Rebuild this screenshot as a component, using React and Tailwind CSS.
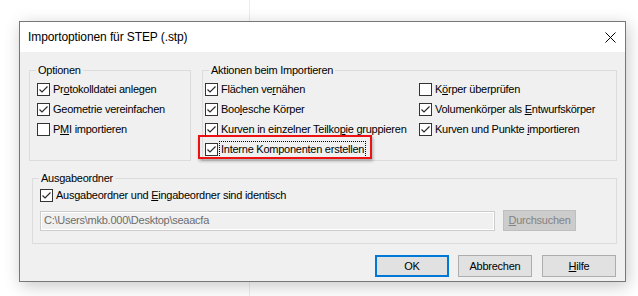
import React from 'react';

// Small Win10 style checkbox
function Box({ checked }) {
  return (
    <span className="w-[13px] h-[13px] border border-[#333333] bg-white flex items-center justify-center shrink-0">
      {checked && (
        <svg width="11" height="11" viewBox="0 0 11 11">
          <path d="M1.5 5.5 L4 8 L9.5 2.5" stroke="#2b2b2b" strokeWidth="1.2" fill="none" />
        </svg>
      )}
    </span>
  );
}

function Check({ checked, children }) {
  return (
    <div className="h-[20px] flex items-center">
      <Box checked={checked} />
      <span className="ml-[3px] leading-[15px]">{children}</span>
    </div>
  );
}

const u = (c) => <span className="underline underline-offset-[1px]">{c}</span>;

export default function App() {
  return (
    <div className="relative w-[638px] h-[296px] bg-white overflow-hidden pt-[21px] pl-[19px] font-['Liberation_Sans',Arial,sans-serif] text-[11px] tracking-[-0.25px] text-black">
      {/* faint window line behind the dialog */}
      <div className="absolute left-[249px] top-0 bottom-0 w-px bg-[#ececec]" />

      <div className="relative w-[607px] h-[261px] border border-[#777777] bg-[#f0f0f0] flex flex-col shadow-[2px_4px_16px_rgba(0,0,0,0.22)]">
        {/* Title bar */}
        <div className="h-[30px] bg-white flex items-center justify-between pl-[8px] pr-[9px] shrink-0">
          <span className="text-[12px] tracking-[-0.1px]">Importoptionen für STEP (.stp)</span>
          <svg width="11" height="11" viewBox="0 0 11 11" className="mt-[1px]">
            <path d="M0.5 0.5 L10.5 10.5 M10.5 0.5 L0.5 10.5" stroke="#000" strokeWidth="1" />
          </svg>
        </div>

        {/* Top groups */}
        <div className="flex mt-[11px] ml-[9px]">
          <fieldset className="w-[162px] h-[98px] border border-[#dcdcdc] pl-[7px] pt-[2px]">
            <legend className="-ml-[1px] px-[2px] leading-[14px]">Optionen</legend>
            <Check checked>Pr{u('o')}tokolldatei anlegen</Check>
            <Check checked>Geometrie vereinfachen</Check>
            <Check>P{u('M')}I importieren</Check>
          </fieldset>

          <fieldset className="ml-[11px] w-[415px] h-[98px] border border-[#dcdcdc] pl-[2px] pt-[2px] flex">
            <legend className="ml-[4px] px-[2px] leading-[14px]">Aktionen beim Importieren</legend>
            <div className="w-[214px]">
              <Check checked>Flächen ve{u('r')}nähen</Check>
              <Check checked>Boo{u('l')}esche Körper</Check>
              <Check checked>Kurven in einzelner Teilko{u('p')}ie gruppieren</Check>
              <div className="relative h-[20px] flex items-center">
                <Box checked />
                <span className="ml-[2px] px-[1px] leading-[15px] outline outline-1 outline-dotted outline-black">
                  Interne Komponenten erstellen
                </span>
                {/* red highlight annotation */}
                <div className="absolute -left-[7px] -top-[4px] w-[174px] h-[24px] border-2 border-[#ee1111] shadow-[1px_2px_3px_rgba(0,0,0,0.3)]" />
              </div>
            </div>
            <div>
              <Check>K{u('ö')}rper überprüfen</Check>
              <Check checked>Volumenkörper als {u('E')}ntwurfskörper</Check>
              <Check checked>Kurven und Punkte {u('i')}mportieren</Check>
            </div>
          </fieldset>
        </div>

        {/* Output folder */}
        <fieldset className="mt-[10px] ml-[12px] w-[585px] h-[73px] border border-[#dcdcdc] pl-[7px]">
          <legend className="-ml-[1px] px-[2px] leading-[14px]">Ausgabeordner</legend>
          <Check checked>Ausgabeordner und {u('E')}ingabeordner sind identisch</Check>
          <div className="flex items-center mt-[5px]">
            <div className="w-[455px] h-[20px] border border-[#cccccc] bg-[#f0f0f0] shadow-[inset_0_0_0_1px_#ffffff] flex items-center pl-[3px] text-[#6d6d6d]">
              C:\Users\mkb.000\Desktop\seaacfa
            </div>
            <button className="ml-[8px] w-[73px] h-[21px] bg-[#cccccc] border border-[#bfbfbf] text-[#838383]">
              {u('D')}urchsuchen
            </button>
          </div>
        </fieldset>

        {/* Buttons */}
        <div className="flex justify-end pr-[9px] mt-[11px]">
          <button className="w-[74px] h-[22px] bg-[#e1e1e1] border-2 border-[#0078d7]">OK</button>
          <button className="ml-[9px] w-[74px] h-[22px] bg-[#e1e1e1] border border-[#adadad]">Abbrechen</button>
          <button className="ml-[10px] w-[74px] h-[22px] bg-[#e1e1e1] border border-[#adadad]">{u('H')}ilfe</button>
        </div>
      </div>
    </div>
  );
}
